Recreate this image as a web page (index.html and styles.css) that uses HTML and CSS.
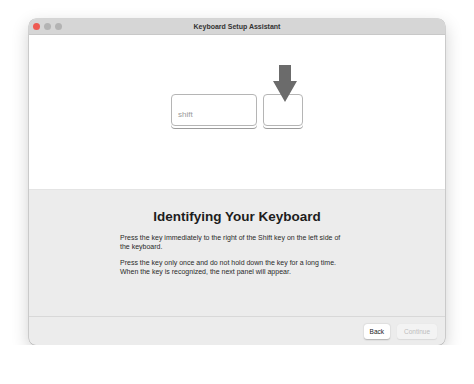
FILE: index.html
```html
<!DOCTYPE html>
<html lang="en">
<head>
    <meta charset="UTF-8">
    <title>Keyboard Setup Assistant</title>
    <link rel="stylesheet" href="styles.css">
</head>
<body>
    <div class="window">
        <div class="titlebar">
            <div class="lights">
                <span class="light red"></span>
                <span class="light"></span>
                <span class="light"></span>
            </div>
            <div class="title">Keyboard Setup Assistant</div>
        </div>

        <div class="stage">
            <div class="keys">
                <div class="key key-shift">shift</div>
                <div class="key key-target">
                    <svg class="arrow" width="26" height="38" viewBox="0 0 26 38">
                        <path d="M7 0 H19 V16 H25 L13 37 L1 16 H7 Z" fill="#6b6b6b"/>
                    </svg>
                </div>
            </div>
        </div>

        <div class="info">
            <h1>Identifying Your Keyboard</h1>
            <p>Press the key immediately to the right of the Shift key on the left side of the keyboard.</p>
            <p>Press the key only once and do not hold down the key for a long time. When the key is recognized, the next panel will appear.</p>
        </div>

        <div class="footer">
            <button class="btn">Back</button>
            <button class="btn btn-disabled">Continue</button>
        </div>
    </div>
</body>
</html>
```

FILE: styles.css
```css
body {
    margin: 0;
    background-color: #ffffff;
    font-family: 'Liberation Sans', Arial, sans-serif;
    color: #222;
}

.window {
    width: 416px;
    height: 326px;
    margin: 19px 0 0 29px;
    display: flex;
    flex-direction: column;
    border-radius: 7px;
    overflow: hidden;
    background-color: #ececec;
    box-shadow: 0 6px 18px rgba(0, 0, 0, 0.2), 0 0 0 0.5px rgba(0, 0, 0, 0.25);
}

.titlebar {
    height: 15px;
    flex-shrink: 0;
    background-color: #d6d6d6;
    display: flex;
    align-items: center;
    position: relative;
    border-bottom: 1px solid #c8c8c8;
}

.lights {
    display: flex;
    gap: 4px;
    padding-left: 4px;
}

.light {
    width: 7px;
    height: 7px;
    border-radius: 50%;
    background-color: #b3b3b3;
}

.light.red {
    background-color: #ee5a52;
}

.title {
    position: absolute;
    left: 0;
    right: 0;
    text-align: center;
    font-size: 7px;
    font-weight: bold;
    color: #333;
}

.stage {
    height: 154px;
    flex-shrink: 0;
    background-color: #ffffff;
    border-bottom: 1px solid #e4e4e4;
}

.keys {
    display: flex;
    gap: 6px;
    padding: 59px 0 0 142px;
}

.key {
    height: 32px;
    border: 1px solid #b5b5b5;
    border-radius: 4px;
    background-color: #ffffff;
    box-shadow: 0 2px 0 #ffffff, 0 3px 0 #9c9c9c;
    box-sizing: border-box;
}

.key-shift {
    width: 86px;
    font-size: 8px;
    color: #9a9a9a;
    padding: 15px 0 0 6px;
}

.key-target {
    width: 40px;
    position: relative;
}

.arrow {
    position: absolute;
    left: 8px;
    top: -30px;
}

.info {
    flex: 1;
    padding: 19px 0 0 91px;
}

.info h1 {
    margin: 0 0 10px -91px;
    font-size: 13.5px;
    font-weight: bold;
    text-align: center;
    color: #1d1d1d;
}

.info p {
    width: 226px;
    margin: 0 0 8px 0;
    font-size: 7px;
    line-height: 8.5px;
    color: #2a2a2a;
}

.footer {
    height: 28px;
    flex-shrink: 0;
    border-top: 1px solid #d8d8d8;
    display: flex;
    justify-content: flex-end;
    align-items: center;
    gap: 7px;
    padding-right: 8px;
}

.btn {
    height: 15px;
    padding: 0 6px;
    font-family: 'Liberation Sans', Arial, sans-serif;
    font-size: 6.5px;
    color: #222;
    background-color: #ffffff;
    border: none;
    border-radius: 3px;
    box-shadow: 0 0.5px 1.5px rgba(0, 0, 0, 0.25);
}

.btn-disabled {
    width: 40px;
    color: #bdbdbd;
    background-color: #f3f3f3;
    box-shadow: 0 0.5px 1px rgba(0, 0, 0, 0.08);
}
```
